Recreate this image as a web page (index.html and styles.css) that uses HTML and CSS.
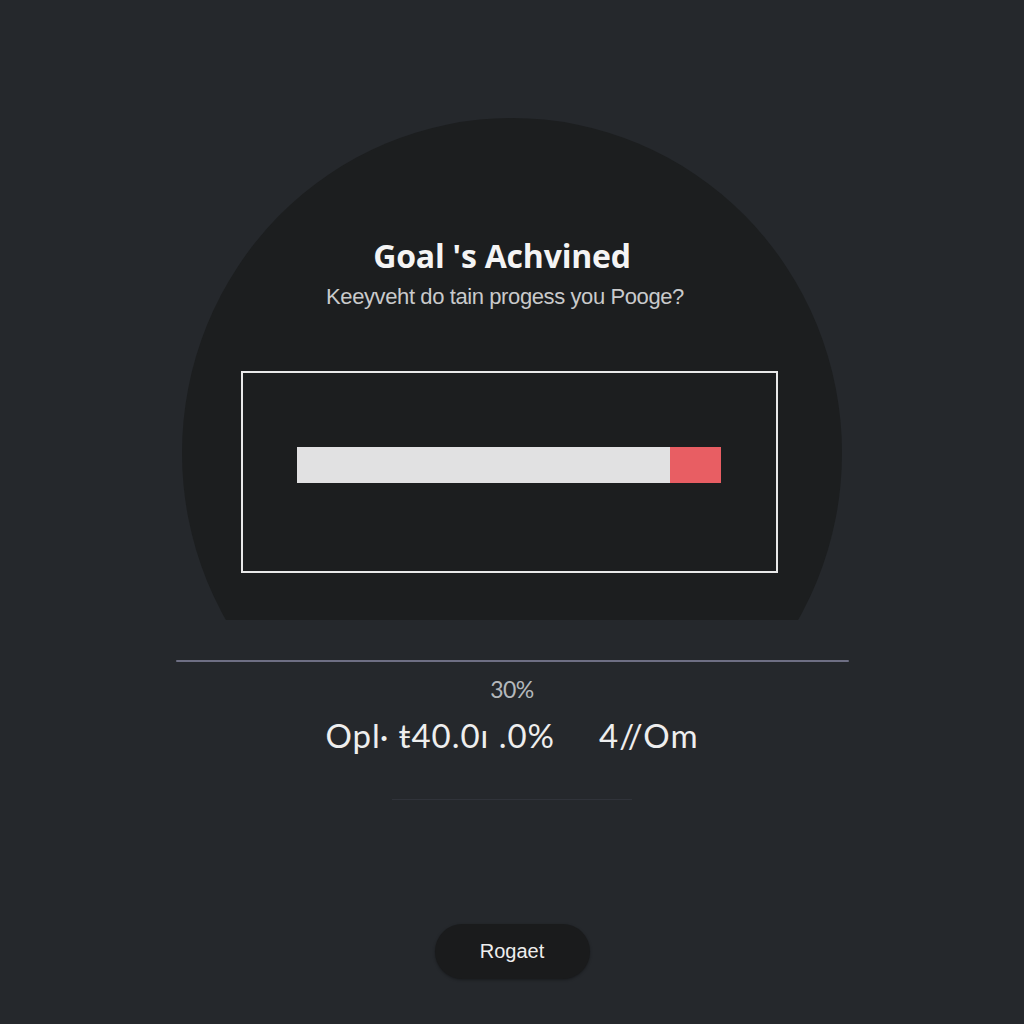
FILE: index.html
```html
<!DOCTYPE html>
<html lang="en">
<head>
<meta charset="utf-8">
<title>Goal's Achvined</title>
<link rel="stylesheet" href="styles.css">
</head>
<body>
<main class="page">
  <section class="hero">
    <div class="disc">
      <h1 class="title">Goal 's Achvined</h1>
      <p class="subtitle">Keeyveht do tain progess you Pooge?</p>
      <div class="box">
        <div class="bar">
          <div class="bar-fill"></div>
          <div class="bar-end"></div>
        </div>
      </div>
    </div>
  </section>
  <div class="divider"></div>
  <p class="percent">30%</p>
  <p class="stats"><span>Opl· ŧ40.0ɪ .0%</span><span>4//Om</span></p>
  <div class="faint"></div>
  <button class="btn">Rogaet</button>
</main>
</body>
</html>
```
FILE: styles.css
```css
html, body {
  margin: 0;
  padding: 0;
}
body {
  width: 1024px;
  height: 1024px;
  overflow: hidden;
  background: #25282c;
  font-family: "Open Sans", "Noto Sans", sans-serif;
}
.page {
  display: flex;
  flex-direction: column;
  align-items: center;
}
.hero {
  width: 660px;
  height: 502px;
  margin-top: 118px;
  overflow: hidden;
}
.disc {
  width: 660px;
  height: 670px;
  border-radius: 50%;
  background: #1c1e1f;
  display: flex;
  flex-direction: column;
  align-items: center;
  box-sizing: border-box;
  padding-top: 118px;
}
.title {
  margin: 0;
  padding-right: 20px;
  font-size: 32px;
  line-height: 40px;
  font-weight: 700;
  color: #f4f4f4;
  letter-spacing: -0.2px;
}
.subtitle {
  margin: 9px 0 0;
  padding-right: 14px;
  font-family: "Liberation Sans", Arial, sans-serif;
  font-size: 22px;
  line-height: 24px;
  color: #c9cacb;
  letter-spacing: -0.4px;
}
.box {
  margin-top: 62px;
  width: 537px;
  height: 202px;
  box-sizing: border-box;
  border: 2px solid #e9e9e9;
  padding: 74px 55px 0 54px;
  margin-left: -5px;
}
.bar {
  display: flex;
  height: 36px;
}
.bar-fill {
  flex: 1;
  background: #e1e1e2;
}
.bar-end {
  width: 51px;
  background: #e85e63;
}
.divider {
  margin-top: 40px;
  width: 673px;
  height: 2px;
  background: #6e6f84;
  border-radius: 1px;
}
.percent {
  margin: 15px 0 0;
  font-family: Lato, "Noto Sans", sans-serif;
  font-size: 23px;
  line-height: 24px;
  color: #b4b8bc;
  letter-spacing: -0.5px;
}
.stats {
  margin: 16px 0 0;
  display: flex;
  gap: 44px;
  font-family: Lato, "Noto Sans", sans-serif;
  font-size: 33px;
  line-height: 36px;
  color: #eeeeee;
  letter-spacing: 1px;
}
.faint {
  margin-top: 46px;
  width: 240px;
  height: 1px;
  background: #30333a;
}
.btn {
  margin-top: 124px;
  width: 155px;
  height: 55px;
  border: none;
  border-radius: 28px;
  background: #1a1b1c;
  box-shadow: 0 1px 3px rgba(0, 0, 0, 0.35);
  color: #eeeeee;
  font-family: "Liberation Sans", Arial, sans-serif;
  font-size: 20px;
  padding: 0;
}
```
